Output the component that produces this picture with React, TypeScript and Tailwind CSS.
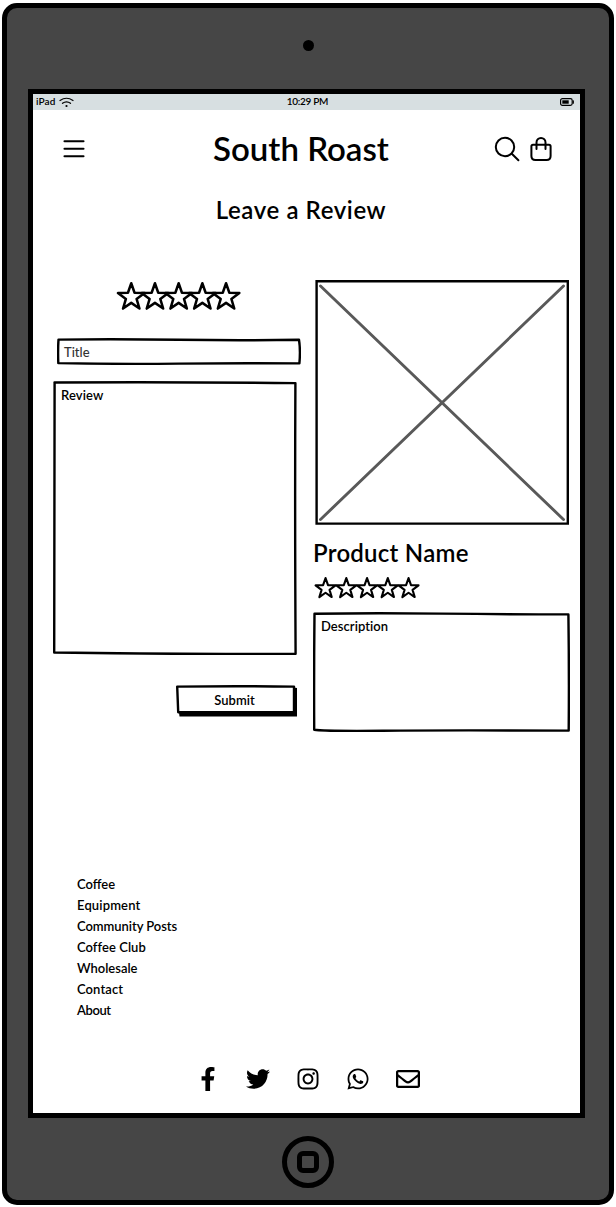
import type { ReactNode } from "react";
import { FaFacebookF, FaInstagram, FaRegEnvelope, FaTwitter, FaWhatsapp } from "react-icons/fa";

const links = [
  { label: "Coffee", spacing: "tracking-[0px]" },
  { label: "Equipment", spacing: "tracking-[0.15px]" },
  { label: "Community Posts", spacing: "tracking-[-0.05px]" },
  { label: "Coffee Club", spacing: "tracking-[0.05px]" },
  { label: "Wholesale", spacing: "tracking-[0px]" },
  { label: "Contact", spacing: "tracking-[0.1px]" },
  { label: "About", spacing: "tracking-[-0.4px]" },
];

const socials = [
  { name: "Facebook", Icon: FaFacebookF },
  { name: "Twitter", Icon: FaTwitter },
  { name: "Instagram", Icon: FaInstagram },
  { name: "WhatsApp", Icon: FaWhatsapp },
  { name: "Email", Icon: FaRegEnvelope },
];

function starPoints(cx: number, cy: number, r: number) {
  return Array.from({ length: 10 }, (_, i) => {
    const radius = i % 2 === 0 ? r : r * 0.4;
    const a = (Math.PI / 5) * i - Math.PI / 2;
    return `${(cx + radius * Math.cos(a)).toFixed(2)},${(cy + radius * Math.sin(a)).toFixed(2)}`;
  }).join(" ");
}

function Stars({ radius, pitch, stroke, className }: { radius: number; pitch: number; stroke: number; className: string }) {
  const c = radius + stroke / 2;
  return (
    <svg className={className} overflow="visible" fill="none" stroke="#000" strokeWidth={stroke} strokeLinejoin="round">
      {[0, 1, 2, 3, 4].map((i) => (
        <polygon key={i} points={starPoints(c + i * pitch, c, radius)} />
      ))}
    </svg>
  );
}

/* Hand-drawn outline stretched behind a box's content. */
function Sketch({ width, height, d, children, className }: { width: number; height: number; d: string; children?: ReactNode; className: string }) {
  return (
    <div className={`relative ${className}`}>
      <svg className="absolute inset-0 h-full w-full" viewBox={`0 0 ${width} ${height}`} preserveAspectRatio="none" fill="none" stroke="#000" strokeWidth="2.4" strokeLinejoin="round">
        <path d={d} />
      </svg>
      <div className="relative">{children}</div>
    </div>
  );
}

export default function App() {
  return (
    <div className="h-[1207px] w-[616px] bg-white px-[2px] pt-[3px] pb-[2px] font-['Lato','Liberation_Sans',sans-serif] font-semibold text-black">
      <div className="flex h-full flex-col items-center rounded-[15px] border-5 border-black bg-[#464646]">
        <div className="flex h-[81px] shrink-0 items-start justify-center pt-[32px]">
          <div className="size-[11px] rounded-full bg-black" />
        </div>

        <div className="-ml-[3px] flex h-[1029px] w-[557px] shrink-0 flex-col border-5 border-black bg-white">
          <div className="grid h-[16px] shrink-0 grid-cols-3 items-center bg-[#d7dfe1] pr-[6px] pl-[3px] text-[10px] leading-[14px]">
            <div className="flex items-center gap-[4px]">
              <span className="mb-[2px] tracking-[0.1px]">iPad</span>
              <svg className="h-[11px] w-[15px]" viewBox="0 0 15 11" fill="none" stroke="#000" strokeWidth="1.2" strokeLinecap="round">
                <path d="M1 3.5Q7.5-1 14 3.5M3.5 6.3Q7.5 3.3 11.5 6.3" />
                <circle cx="7.5" cy="9" r="1.1" fill="#000" stroke="none" />
              </svg>
            </div>
            <span className="mb-[2px] pl-[5px] text-center tracking-[-0.3px]">10:29 PM</span>
            <svg className="h-[8px] w-[14px] justify-self-end" viewBox="0 0 14 8" fill="none" stroke="#000" strokeWidth="1.2">
              <rect x="0.6" y="0.6" width="11.6" height="6.8" rx="1.8" />
              <path d="M13.3 2.8v2.4" strokeLinecap="round" />
              <rect x="2.3" y="2.3" width="6.4" height="3.4" fill="#000" stroke="none" />
            </svg>
          </div>

          <header className="flex h-[78px] shrink-0 items-center justify-between pr-[28px] pl-[30px]">
            <svg className="h-[20px] w-[22px]" viewBox="0 0 22 20" stroke="#000" strokeWidth="2.1" strokeLinecap="round">
              <path d="M1.5 2.2h19M1.5 9.7h19M1.5 17.2h19" />
            </svg>
            <h1 className="mb-[2px] ml-[23px] text-[33px] leading-[40px] tracking-[0px] whitespace-nowrap">South Roast</h1>
            <div className="flex items-center gap-[10px]">
              <svg className="size-[26px]" viewBox="0 0 26 26" fill="none" stroke="#000" strokeWidth="2" strokeLinecap="round">
                <circle cx="11" cy="11" r="9.2" />
                <path d="M17.8 17.8l6.6 6.4" />
              </svg>
              <svg className="h-[26px] w-[22px]" viewBox="0 0 22 26" fill="none" stroke="#000" strokeWidth="2" strokeLinecap="round" strokeLinejoin="round">
                <path d="M3 8.7h16q1.6 0 1.6 1.6V20q0 4-4 4H5.4q-4 0-4-4v-9.7Q1.4 8.7 3 8.7z" />
                <path d="M6.5 13V6.5a4.5 4.5 0 0 1 9 0V13" />
              </svg>
            </div>
          </header>

          <h2 className="h-[44px] shrink-0 pr-[11px] text-center text-[24px] leading-[44px] tracking-[0.6px]">Leave a Review</h2>

          <main className="flex shrink-0 items-start">
            <section className="ml-[20px] flex w-[248px] flex-col">
              <Stars radius={14} pitch={23.7} stroke={2.5} className="mt-[50px] ml-[63px] h-[30px] w-[124px]" />
              <Sketch width={244} height={27} className="mt-[26px] ml-[4px] h-[27px] w-[244px]" d="M1.5 1.6Q60 .9 122 1.8T242 1.8Q243.6 12 242.4 25.4Q180 24.900 122 25.600T1.300 25.100Q.8 12 1.500 1.600z">
                <span className="block pl-[7px] text-[13px] leading-[28px] font-medium text-[#333]">Title</span>
              </Sketch>
              <Sketch width={244} height={274} className="mt-[16px] h-[274px] w-[244px]" d="M1.500 1.500Q120 .8 242.400 2.100Q241.800 130 242.600 272.700Q120 273.500 1.200 271.500Q2 130 1.600 1.500z">
                <span className="block pt-[5px] pl-[8px] text-[13px] leading-[18px] tracking-[0.1px]">Review</span>
              </Sketch>
              <div className="relative mt-[30px] ml-[123px] h-[32px] w-[121px]">
                <svg className="absolute inset-0 h-full w-full" viewBox="0 0 121 32">
                  <path d="M3 27.500L117 2.500l4 .5V31.500H3.500z" />
                  <path d="M1.200 1.600Q60 .8 118 1.600V27.200H2.200z" fill="#fff" stroke="#000" strokeWidth="2.400" strokeLinejoin="round" />
                </svg>
                <button className="relative h-[31px] w-[117px] text-center text-[13px] leading-[29px]">Submit</button>
              </div>
            </section>

            <section className="ml-[12px] flex w-[257px] flex-col">
              <svg className="mt-[48px] ml-[2px] h-[245px] w-[254px]" viewBox="0 0 254 245" fill="none">
                <path d="M1.600 1.200H252.800V243.600H1.600z" stroke="#000" strokeWidth="2.400" />
                <path d="M5.500 6L248.500 239.500M248.500 6L5.500 239.500" stroke="#595959" strokeWidth="2.900" strokeLinecap="round" />
              </svg>
              <h3 className="mt-[12px] text-[24px] leading-[32px] tracking-[0.25px] whitespace-nowrap">Product Name</h3>
              <Stars radius={10.5} pitch={20.75} stroke={2.1} className="mt-[8px] ml-[1px] h-[23px] w-[106px]" />
              <Sketch width={257} height={120} className="mt-[12px] h-[120px] w-[257px]" d="M1.500 1.700Q60 .8 128 1.600T255.400 2.400Q256.200 60 255.700 118.600Q128 118.200 70 118.700T1.200 117.700Q.9 60 1.500 1.700z">
                <span className="block pt-[5px] pl-[8px] text-[13px] leading-[18px] tracking-[0.05px]">Description</span>
              </Sketch>
            </section>
          </main>

          <footer className="mt-[142px] flex flex-col">
            <ul className="ml-[44px] text-[13px] leading-[21px]">
              {links.map((l) => (
                <li key={l.label}>
                  <span className={l.spacing}>{l.label}</span>
                </li>
              ))}
            </ul>
            <div className="mt-[45px] ml-[150px] flex">
              {socials.map(({ name, Icon }) => (
                <a key={name} aria-label={name} className="flex h-[25px] w-[50px] items-center justify-center">
                  <Icon className="size-[24px]" />
                </a>
              ))}
            </div>
          </footer>
        </div>

        <div className="mt-[18px] flex size-[52px] shrink-0 items-center justify-center rounded-full border-5 border-black">
          <div className="size-[22px] rounded-[6px] border-5 border-black" />
        </div>
      </div>
    </div>
  );
}
